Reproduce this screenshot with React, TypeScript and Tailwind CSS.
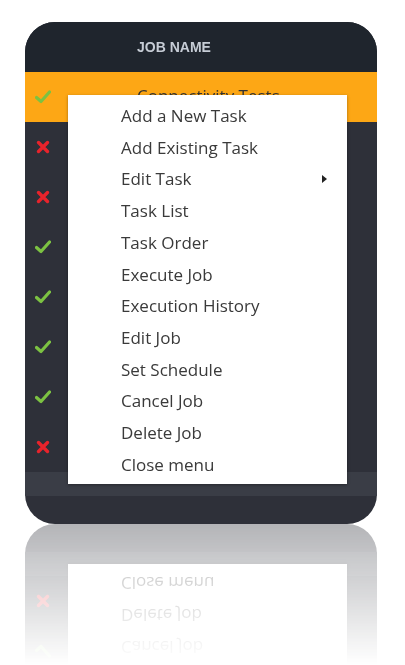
const jobs = [
  { id: 1, name: "Connectivity Tests", ok: true },
  { id: 2, name: "", ok: false },
  { id: 3, name: "", ok: false },
  { id: 4, name: "", ok: true },
  { id: 5, name: "", ok: true },
  { id: 6, name: "", ok: true },
  { id: 7, name: "", ok: true },
  { id: 8, name: "", ok: false },
];

const menuItems = [
  "Add a New Task",
  "Add Existing Task",
  "Edit Task",
  "Task List",
  "Task Order",
  "Execute Job",
  "Execution History",
  "Edit Job",
  "Set Schedule",
  "Cancel Job",
  "Delete Job",
  "Close menu",
];

function Check() {
  return (
    <svg width="16" height="14" viewBox="0 0 16 14">
      <path d="M1.5 7.5 L6 11.5 L14.5 2" fill="none" stroke="#7cc242" strokeWidth="3.2" strokeLinecap="round" strokeLinejoin="round" />
    </svg>
  );
}

function Cross() {
  return (
    <svg width="14" height="14" viewBox="0 0 14 14">
      <path d="M2.5 2.5 L11.5 11.5 M11.5 2.5 L2.5 11.5" fill="none" stroke="#e8232b" strokeWidth="3.4" strokeLinecap="round" />
    </svg>
  );
}

export default function App() {
  return (
    <div className="min-h-screen bg-white pt-[22px] pl-[25px] font-['Open_Sans','Noto_Sans',sans-serif]">
      <div className="relative w-[352px] h-[502px] rounded-[30px] overflow-hidden bg-[#2e3039] [-webkit-box-reflect:below_0_linear-gradient(to_bottom,transparent_72%,rgba(0,0,0,0.36))]">
        {/* Header */}
        <div className="h-[50px] bg-[#1f252d] flex items-center pl-[112px]">
          <span className="text-[14px] font-semibold text-[#c6ccd5] font-['Liberation_Sans',sans-serif]">
            JOB NAME
          </span>
        </div>

        {/* Rows */}
        {jobs.map((job, i) => (
          <div
            key={job.id}
            className={`h-[50px] flex items-center ${i === 0 ? "bg-[#fda715]" : "bg-[#2e3039]"}`}
          >
            <div className="w-[36px] flex justify-center">{job.ok ? <Check /> : <Cross />}</div>
            {job.name && (
              <span className="pl-[76px] text-[17px] text-[#333] -mt-[2px]">{job.name}</span>
            )}
          </div>
        ))}
        <div className="h-[24px] bg-[#3a3d46]" />

        {/* Context menu */}
        <div className="absolute left-[43px] top-[73px] w-[279px] h-[389px] bg-white pt-[5px] shadow-[0_1px_3px_rgba(0,0,0,0.35)]">
          {menuItems.map((item) => (
            <div key={item} className="relative h-[31.7px] flex items-center pl-[53px] text-[17px] text-[#3a3a3a]">
              {item}
              {item === "Edit Task" && (
                <span className="absolute right-[20px] top-1/2 -translate-y-1/2 w-0 h-0 border-y-[4px] border-y-transparent border-l-[5px] border-l-[#222]" />
              )}
            </div>
          ))}
        </div>
      </div>
    </div>
  );
}
